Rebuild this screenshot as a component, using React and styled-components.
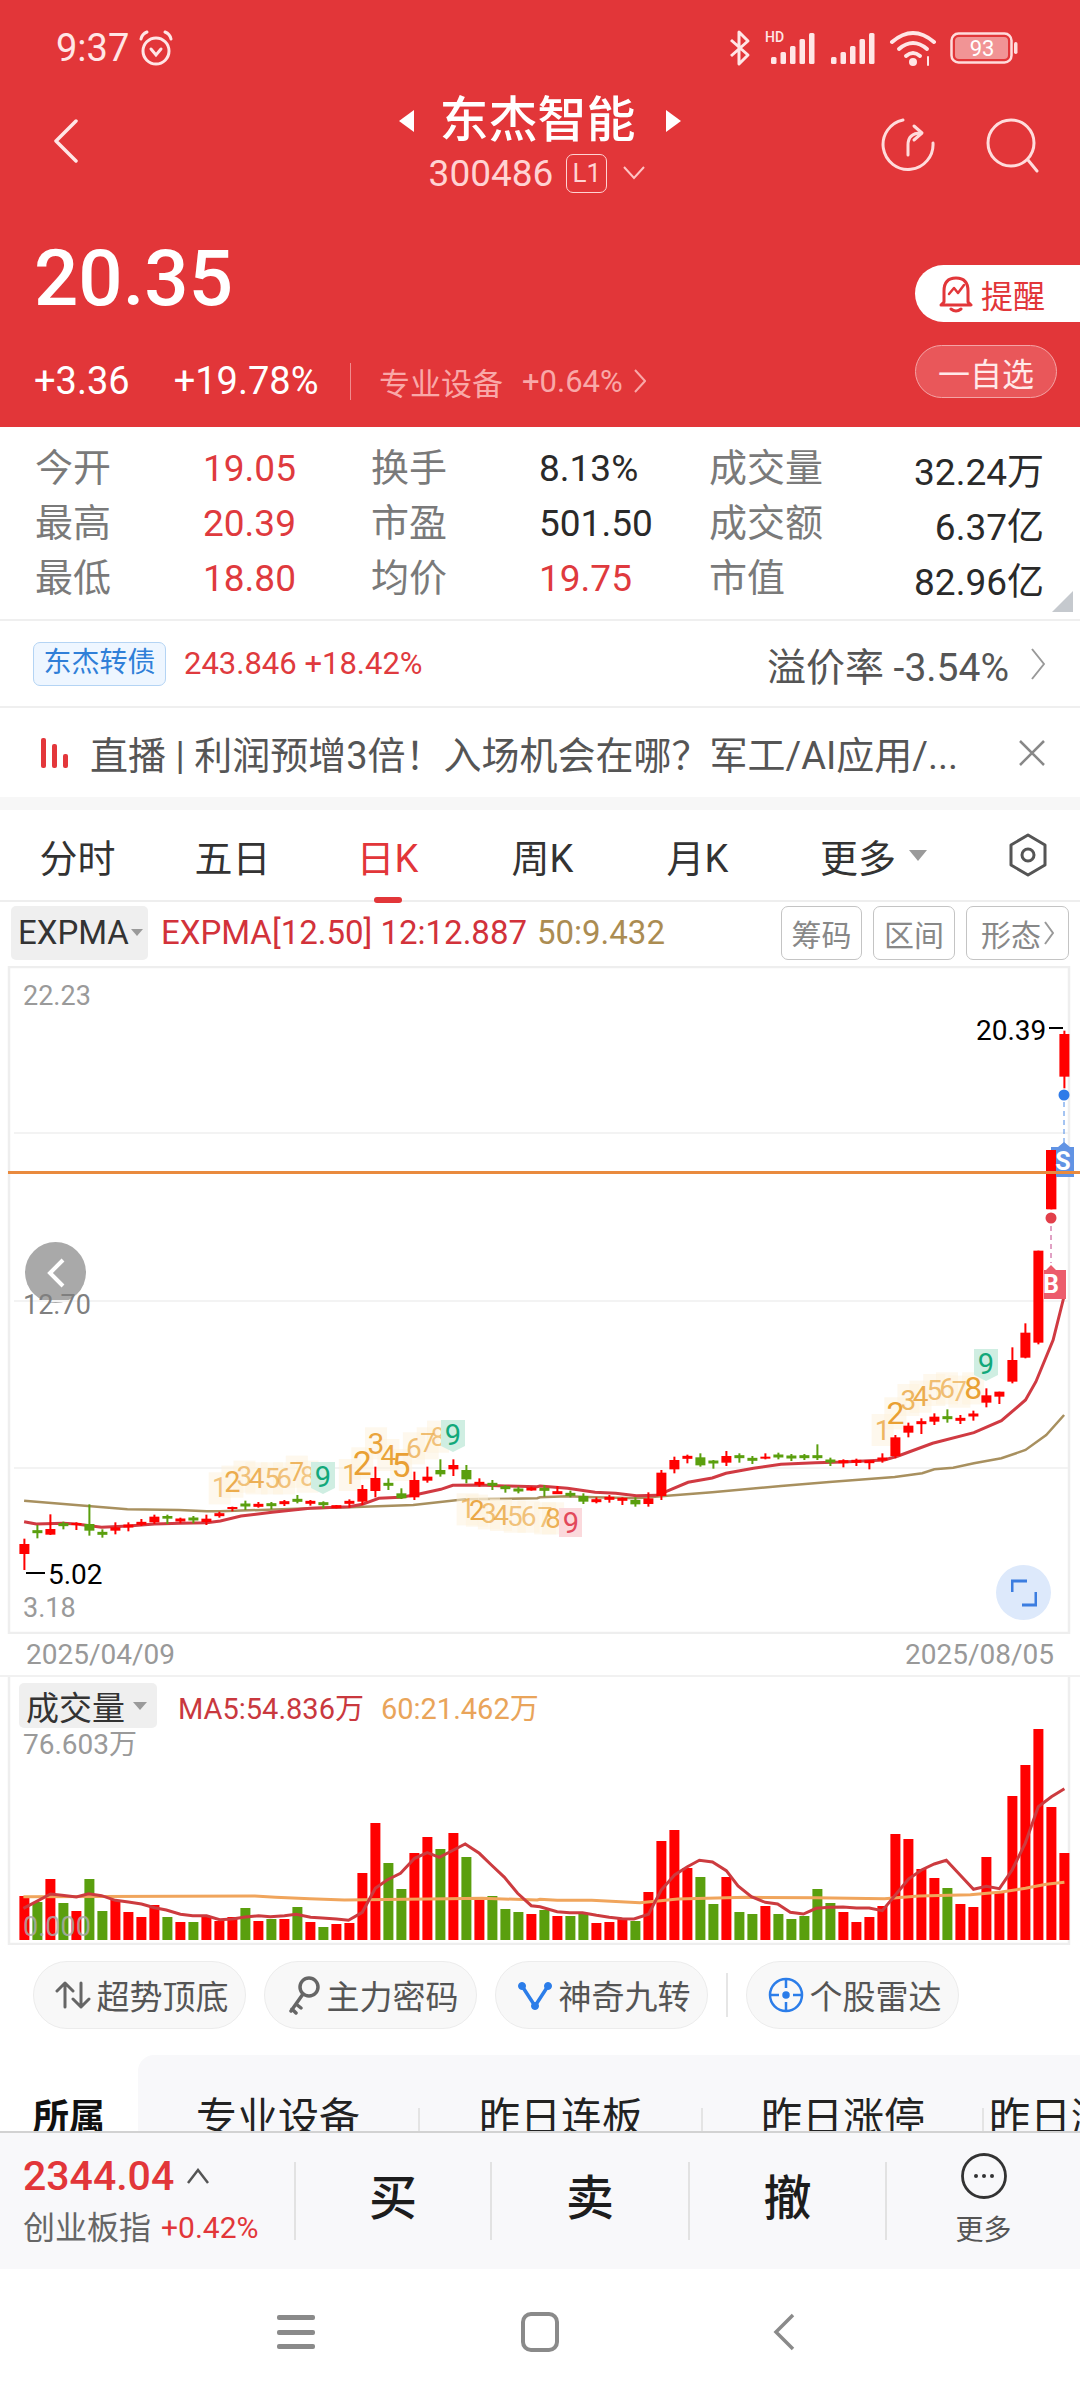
import React from 'react';
import styled, { createGlobalStyle } from 'styled-components';

const GlobalStyle = createGlobalStyle`
  html, body { margin: 0; padding: 0; background: #fff; }
  body { font-family: Roboto, "Noto Sans CJK SC", sans-serif; }
  * { box-sizing: border-box; }
`;

const RED = '#e23639';
const BAR_RED = '#ff0000';
const BAR_GREEN = '#5a9f0e';

const Page = styled.div`
  width: 1080px;
  height: 2400px;
  display: flex;
  flex-direction: column;
  overflow: hidden;
  background: #fff;
`;

/* ---------- red quote header ---------- */
const Header = styled.header`
  height: 427px;
  flex: none;
  background: ${RED};
  color: #fff;
  display: flex;
  flex-direction: column;
`;

const StatusBar = styled.div`
  height: 96px;
  display: flex;
  align-items: center;
  padding: 0 62px 0 56px;
`;

const Clock = styled.span`
  font-size: 38px;
  color: #ffe6e6;
  margin-right: 8px;
`;

const StatusIcons = styled.div`
  margin-left: auto;
  display: flex;
  align-items: center;
  gap: 13px;
`;

const NavRow = styled.div`
  height: 104px;
  display: grid;
  grid-template-columns: 1fr auto 1fr;
  align-items: center;
  padding: 0 40px 6px 40px;
`;

const BackSlot = styled.div`
  display: flex;
  padding: 0 0 8px 13px;
`;

const TitleBlock = styled.div`
  display: flex;
  flex-direction: column;
  align-items: center;
`;

const TitleLine = styled.div`
  display: flex;
  align-items: center;
  height: 50px;
`;

const Title = styled.h1`
  margin: 0 30px 0 25px;
  font-size: 49px;
  font-weight: 500;
  line-height: 50px;
  color: #fff;
`;

const Arrow = styled.span`
  width: 0;
  height: 0;
  border-top: 11px solid transparent;
  border-bottom: 11px solid transparent;
  ${(p) => (p.$left ? 'border-right: 15px solid #fff;' : 'border-left: 15px solid #fff;')}
`;

const CodeLine = styled.div`
  display: flex;
  align-items: center;
  height: 42px;
  margin: 6px 6px 0 0;
  color: #ffd3d3;
`;

const Code = styled.span`
  font-size: 37px;
`;

const LevelTag = styled.span`
  width: 41px;
  height: 39px;
  margin: 0 16px 0 13px;
  border: 1.5px solid #ffd3d3;
  border-radius: 7px;
  font-size: 26px;
  line-height: 36px;
  text-align: center;
`;

const NavActions = styled.div`
  display: flex;
  justify-content: flex-end;
  gap: 51px;
`;

const QuoteBlock = styled.div`
  flex: 1;
  display: flex;
  justify-content: space-between;
  padding-left: 34px;
`;

const QuoteLeft = styled.div`
  display: flex;
  flex-direction: column;
`;

const Price = styled.div`
  font-size: 78px;
  font-weight: 500;
  line-height: 80px;
  margin: 39px 0 0 0;
`;

const ChangeLine = styled.div`
  display: flex;
  align-items: center;
  height: 38px;
  margin-top: 43px;
  font-size: 38px;
`;

const ChangeValue = styled.span`
  margin-right: ${(p) => p.$gap}px;
`;

const Divider = styled.span`
  width: 1.5px;
  height: 37px;
  background: #f08c8e;
  margin-right: 28px;
`;

const SectorName = styled.span`
  font-size: 31px;
  color: #f9a8a8;
  margin-right: 19px;
`;

const SectorChange = styled.span`
  font-size: 31px;
  color: #f9a8a8;
  margin-right: 11px;
`;

const QuoteRight = styled.div`
  display: flex;
  flex-direction: column;
  align-items: flex-end;
  padding-top: 65px;
`;

const RemindButton = styled.div`
  width: 165px;
  height: 57px;
  background: #fff;
  border-radius: 29px 0 0 29px;
  display: flex;
  align-items: center;
  gap: 8px;
  padding-left: 24px;
  color: ${RED};
  font-size: 32px;
`;

const WatchButton = styled.div`
  width: 142px;
  height: 53px;
  margin: 23px 23px 0 0;
  background: #e9575a;
  border: 1.5px solid #f4a4a5;
  border-radius: 27px;
  display: flex;
  align-items: center;
  justify-content: center;
  color: #ffe9e9;
  font-size: 32px;
`;

/* ---------- stats table ---------- */
const Stats = styled.section`
  position: relative;
  height: 194px;
  flex: none;
  padding: 14px 36px 0 35px;
  display: grid;
  grid-template-columns: 168px 168px 168px 170px 130px 1fr;
  grid-auto-rows: 55px;
  align-items: center;
  border-bottom: 2px solid #efefef;
`;

const StatLabel = styled.span`
  font-size: 38px;
  line-height: 46px;
  padding-bottom: 2px;
  color: #7a7a7a;
`;

const StatValue = styled.span`
  font-size: 37px;
  color: ${(p) => (p.$up ? '#df3a3e' : '#2a2a2a')};
  white-space: nowrap;
  ${(p) => p.$end && 'text-align: right;'}
`;

const FoldCorner = styled.span`
  position: absolute;
  right: 7px;
  bottom: 7px;
  border-left: 21px solid transparent;
  border-bottom: 21px solid #c5c9ce;
`;

const BondRow = styled.section`
  height: 87px;
  flex: none;
  display: flex;
  align-items: center;
  padding: 0 35px 0 33px;
  border-bottom: 2px solid #efefef;
`;

const BondTag = styled.span`
  width: 133px;
  height: 44px;
  background: #eef6ff;
  border: 1.5px solid #b4d4f4;
  border-radius: 7px;
  color: #2f7fd8;
  font-size: 28px;
  line-height: 40px;
  text-align: center;
`;

const BondQuote = styled.span`
  margin-left: 18px;
  font-size: 31px;
  color: #df3a3e;
`;

const Premium = styled.span`
  margin-left: auto;
  font-size: 39px;
  color: #555;
  margin-right: 22px;
  white-space: nowrap;
`;

const NewsRow = styled.section`
  height: 89px;
  flex: none;
  display: flex;
  align-items: center;
  padding: 0 35px 0 41px;
`;

const NewsBars = styled.span`
  display: flex;
  align-items: flex-end;
  gap: 6px;
  height: 30px;
  margin-right: 22px;
`;

const NewsBar = styled.i`
  width: 5px;
  height: ${(p) => p.$h}px;
  background: #e3373b;
  border-radius: 2px;
`;

const NewsText = styled.span`
  flex: 1;
  font-size: 38px;
  color: #555;
  white-space: nowrap;
`;

const Band = styled.div`
  height: 13px;
  flex: none;
  background: #f7f7f7;
`;

/* ---------- period tabs ---------- */
const Tabs = styled.nav`
  height: 92px;
  flex: none;
  display: flex;
  align-items: center;
  padding-right: 32px;
  border-bottom: 2px solid #eee;
`;

const Tab = styled.div`
  position: relative;
  width: ${(p) => p.$w || 155}px;
  height: 100%;
  display: flex;
  align-items: center;
  justify-content: center;
  font-size: 38px;
  color: ${(p) => (p.$active ? RED : '#333')};
  ${(p) =>
    p.$active &&
    `&::after {
      content: '';
      position: absolute;
      left: 64px;
      bottom: -3px;
      width: 28px;
      height: 6px;
      border-radius: 3px;
      background: ${RED};
    }`}
`;

const Caret = styled.span`
  margin-left: ${(p) => p.$gap || 10}px;
  border-left: ${(p) => p.$w || 9}px solid transparent;
  border-right: ${(p) => p.$w || 9}px solid transparent;
  border-top: ${(p) => p.$h || 11}px solid #9a9a9a;
`;

const TabGear = styled.span`
  margin-left: auto;
  display: flex;
`;

const IndicatorRow = styled.div`
  height: 64px;
  flex: none;
  display: flex;
  align-items: center;
  padding: 3px 11px 6px 11px;
`;

const SelectBox = styled.div`
  height: ${(p) => p.$h}px;
  width: ${(p) => p.$w}px;
  padding-left: 7px;
  background: #efefef;
  border-radius: 5px;
  display: flex;
  align-items: center;
  font-size: 33px;
  color: #333;
`;

const Legend = styled.span`
  font-size: ${(p) => p.$size || 33}px;
  color: ${(p) => p.$color};
  margin-left: ${(p) => p.$gap}px;
  white-space: nowrap;
`;

const ToolGroup = styled.div`
  margin-left: auto;
  display: flex;
  gap: 11px;
`;

const ToolButton = styled.div`
  width: ${(p) => p.$w}px;
  height: 54px;
  border: 1.5px solid #c4c4c4;
  border-radius: 7px;
  display: flex;
  align-items: center;
  justify-content: center;
  gap: 3px;
  font-size: 30px;
  color: #888;
`;

/* ---------- charts ---------- */
const ChartArea = styled.div`
  position: relative;
  height: ${(p) => p.$h}px;
  flex: none;
`;

const ChartSvg = styled.svg`
  position: relative;
  z-index: 1;
  display: block;
`;

const AxisText = styled.text`
  font-size: ${(p) => p.$size || 27}px;
  fill: ${(p) => p.$fill || '#9a9a9a'};
`;

const SeqDigit = styled.text`
  font-size: ${(p) => p.$size}px;
  fill: ${(p) => p.$fill};
  text-anchor: middle;
  dominant-baseline: central;
`;

// sits under the chart layer so the axis label stays readable on top of it
const PrevButton = styled.div`
  position: absolute;
  z-index: 0;
  left: 25px;
  top: 276px;
  width: 61px;
  height: 61px;
  border-radius: 50%;
  background: #a9a9a9;
  display: flex;
  align-items: center;
  justify-content: center;
`;

const ExpandButton = styled.div`
  position: absolute;
  z-index: 2;
  left: 996px;
  top: 599px;
  width: 55px;
  height: 55px;
  border-radius: 50%;
  background: #dde9fb;
  display: flex;
  align-items: center;
  justify-content: center;
`;

const DateRow = styled.div`
  height: 43px;
  flex: none;
  display: flex;
  justify-content: space-between;
  align-items: center;
  padding: 0 26px;
  font-size: 28px;
  color: #999;
  border-bottom: 2px solid #f1f1f1;
`;

const VolumeLegend = styled.div`
  position: absolute;
  z-index: 2;
  left: 19px;
  top: 6px;
  display: flex;
  align-items: center;
`;

/* ---------- shortcut chips ---------- */
const ChipRow = styled.div`
  height: 110px;
  flex: none;
  display: flex;
  align-items: flex-start;
  gap: 18px;
  padding: 16px 0 0 33px;
`;

const Chip = styled.div`
  width: 213px;
  height: 68px;
  padding-left: 4px;
  background: #f8f8f8;
  border: 1.5px solid #ececec;
  border-radius: 34px;
  display: flex;
  align-items: center;
  justify-content: center;
  gap: 6px;
  font-size: 33px;
  color: #555;
`;

const ChipDivider = styled.span`
  width: 2px;
  height: 44px;
  margin-top: 12px;
  background: #e6e6e6;
`;

/* ---------- sector strip, half hidden by the trade bar ---------- */
const SectorStrip = styled.div`
  height: 76px;
  flex: none;
  display: flex;
  overflow: hidden;
`;

const StripLabel = styled.div`
  width: 138px;
  padding: 38px 0 0 33px;
  font-size: 36px;
  line-height: 50px;
  font-weight: 700;
  color: #111;
`;

const StripPanel = styled.div`
  flex: 1;
  display: flex;
  background: #f8f8fa;
  border-radius: 16px 0 0 0;
`;

const StripItem = styled.div`
  position: relative;
  flex: none;
  width: ${(p) => p.$w}px;
  padding: 35px 0 0 ${(p) => p.$pad}px;
  font-size: 41px;
  line-height: 56px;
  color: #222;
  white-space: nowrap;
  overflow: hidden;
  &::after {
    content: '';
    position: absolute;
    right: 0;
    top: 53px;
    width: 2px;
    height: 30px;
    background: #e4e4e4;
    display: ${(p) => (p.$last ? 'none' : 'block')};
  }
`;

/* ---------- trade bar ---------- */
const TradeBar = styled.div`
  height: 138px;
  flex: none;
  display: flex;
  align-items: center;
  background: #f8f8fa;
  border-top: 2px solid #d2d2d2;
`;

const IndexCell = styled.div`
  width: 294px;
  padding-left: 23px;
`;

const IndexValue = styled.div`
  display: flex;
  align-items: center;
  gap: 12px;
  font-size: 41px;
  font-weight: 500;
  line-height: 48px;
  color: ${RED};
`;

const IndexName = styled.div`
  display: flex;
  align-items: center;
  gap: 10px;
  margin-top: 6px;
  font-size: 32px;
  line-height: 44px;
  color: #666;
`;

const IndexChange = styled.span`
  font-size: 30px;
  color: ${RED};
`;

const TradeCell = styled.div`
  width: ${(p) => p.$w}px;
  height: 78px;
  border-left: 2px solid #e2e2e2;
  display: flex;
  flex-direction: column;
  align-items: center;
  justify-content: center;
  & > * {
    flex: none;
  }
`;

const TradeAction = styled.span`
  font-size: 48px;
  font-weight: 500;
  line-height: 60px;
  margin-bottom: 4px;
  color: #1d1d1d;
`;

const MoreLabel = styled.span`
  font-size: 28px;
  line-height: 36px;
  color: #555;
  margin-top: 14px;
`;

const SystemNav = styled.div`
  flex: 1;
  display: flex;
  justify-content: center;
  align-items: center;
  padding-bottom: 5px;
  background: #fff;
`;

const NavSlot = styled.div`
  width: 244px;
  display: flex;
  justify-content: center;
`;

/* ---------- chart data ---------- */
const STATS = [
  ['今开', '19.05', true, '换手', '8.13%', false, '成交量', '32.24万'],
  ['最高', '20.39', true, '市盈', '501.50', false, '成交额', '6.37亿'],
  ['最低', '18.80', true, '均价', '19.75', true, '市值', '82.96亿'],
];

// candle column x on the shared 13px pitch
const slotX = (i) => 24.4 + 13 * i;
const VOL_BASE = 1940;

// [up?, height] per session
const VOLUME = [
  [1, 44], [0, 38], [1, 61], [0, 37], [1, 29], [0, 61], [0, 29], [1, 40], [1, 28], [1, 23],
  [1, 35], [0, 23], [1, 18], [0, 18], [1, 23], [1, 19], [1, 23], [0, 32], [1, 19], [0, 21],
  [1, 21], [0, 33], [1, 18], [0, 13], [1, 16], [1, 17], [1, 67], [1, 117], [0, 77], [0, 51],
  [1, 87], [1, 103], [0, 91], [1, 107], [0, 83], [1, 43], [0, 44], [0, 31], [0, 28], [1, 26],
  [0, 30], [1, 24], [0, 24], [0, 26], [1, 17], [1, 18], [1, 21], [0, 19], [1, 48], [1, 99],
  [1, 110], [1, 72], [0, 63], [0, 36], [1, 63], [0, 28], [0, 26], [1, 34], [0, 26], [0, 21],
  [0, 24], [0, 51], [0, 37], [1, 28], [1, 18], [1, 23], [1, 34], [1, 106], [1, 101], [1, 71],
  [1, 62], [0, 52], [1, 36], [1, 33], [1, 83], [1, 47], [1, 144], [1, 175], [1, 211], [1, 133],
  [1, 87],
];

// Line samples are stored at 3x vertically and 2.904x horizontally with an origin per batch,
// which keeps them whole numbers.
const toPoints = (pts, ox, oy) => pts.map(([x, y]) => `${(ox + x / 2.904).toFixed(1)},${(oy + y / 3).toFixed(1)}`).join(' ');

const MA5 =
  toPoints(
    [[68,685],[105,665],[147,642],[180,646],[222,651],[257,641],[295,647],[335,661],[373,666],[411,672],[449,683],[483,690],[524,703],[560,707],[600,707],[638,719],[675,717],[712,711],[751,707],[785,710],[826,707],[860,703],[902,712],[936,714],[977,717],[1012,721],[1052,697],[1090,625],[1124,600],[1163,580],[1204,535],[1241,518],[1276,532],[1317,510],[1351,492],[1392,520],[1427,555],[1465,592],[1503,640],[1543,677]],
    0, 1680
  ) +
  ' ' +
  toPoints(
    [[0,680],[50,695],[86,698],[123,698],[164,706],[201,712],[239,716],[273,717],[315,703],[352,630],[391,585],[428,560],[463,541],[501,546],[541,572],[575,618],[614,650],[654,667],[690,672],[727,697],[765,702],[802,685],[841,682],[880,681],[919,684],[956,684],[994,692],[1032,645],[1070,597],[1108,570],[1145,552],[1180,541],[1220,585],[1259,628],[1296,619],[1334,626],[1371,570],[1409,490],[1447,380],[1485,350],[1523,326]],
    540, 1680
  );

const MA60 =
  toPoints([[68,650],[740,648],[800,652],[900,656],[1000,660],[1300,656],[1400,655],[1560,660]], 0, 1680) +
  ' ' +
  toPoints([[0,658],[50,661],[150,661],[290,668],[350,662],[400,657],[600,652],[800,653],[1000,656],[1100,648],[1250,644],[1340,636],[1410,625],[1470,613],[1523,607]], 540, 1680);

const EMA12 =
  toPoints([[70,245],[105,252],[183,250],[222,252],[295,262],[373,258],[449,252],[524,250],[600,248],[640,243],[700,228],[790,217],[900,205],[1014,200],[1052,193],[1100,175],[1163,172],[1204,165],[1280,148],[1315,136],[1392,135],[1465,138],[1560,140]], 0, 1440) +
  ' ' +
  toPoints([[0,318],[80,325],[160,337],[220,340],[280,347],[340,346],[430,307],[500,294],[540,280],[620,265],[700,253],[800,248],[880,246],[1000,240],[1040,228],[1140,190],[1260,158],[1340,122],[1410,60],[1440,5]], 540, 1380) +
  ' ' +
  toPoints([[1490,420],[1523,285]], 540, 1200);

const EMA50 =
  toPoints([[70,182],[370,208],[520,210],[600,214],[640,214],[900,205],[1014,202],[1200,195],[1350,178],[1560,175]], 0, 1440) +
  ' ' +
  toPoints([[0,352],[80,349],[160,352],[280,355],[370,347],[500,337],[700,318],[840,306],[1030,291],[1110,280],[1145,268],[1200,263],[1260,250],[1340,235],[1410,210],[1470,165],[1522,105]], 540, 1380);

// [up?, wickTop, bodyTop, bodyBottom, wickBottom]; equal body ends make a doji
const rows = (list, origin) =>
  list.map(([u, a, b, c, d]) => [u, origin + a / 3, origin + b / 3, origin + c / 3, origin + d / 3]);

const CANDLES = [
  ...rows(
    [
      [1,296,312,342,390],[0,255,275,275,295],[1,223,267,284,285],[0,245,254,254,268],[1,247,249,255,270],
      [0,193,252,272,287],[0,268,280,280,293],[1,247,262,272,283],[1,247,258,258,274],[1,237,250,250,258],
      [1,224,230,247,252],[0,224,228,236,252],[1,233,240,240,250],[0,228,237,237,250],[1,224,236,246,255],
      [1,215,224,224,233],[1,200,201,207,214],[0,182,195,195,210],[1,186,196,196,203],[0,186,194,194,208],
      [1,180,188,188,198],[0,165,181,181,190],[1,180,187,187,197],[0,184,191,191,205],[1,195,200,200,205],
      [1,178,187,187,203],[1,135,147,185,195],[1,80,114,153,172],[0,115,133,133,150],[0,145,160,175,177],
      [1,95,120,172,180],[1,80,110,122,128],[0,58,90,103,110],[1,58,75,88,108],[0,75,90,118,130],
      [1,115,130,130,140],[0,120,133,133,150],[0,135,143,143,158],[0,140,150,150,160],[1,140,147,147,152],
    ],
    1440
  ),
  ...rows(
    [
      [0,315,328,328,350],[1,318,338,338,342],[0,332,343,343,352],[0,340,348,365,372],[1,352,362,362,370],
      [1,345,355,355,368],[1,352,358,358,375],[0,352,360,373,380],[1,337,355,372,380],[1,270,278,348,360],
      [1,230,240,268,280],[1,224,232,232,250],[0,220,232,256,260],[0,240,246,246,266],[1,213,228,248,258],
      [0,220,230,230,248],[0,228,238,238,252],[1,220,230,236,238],[0,218,228,228,238],[0,222,231,231,243],
      [0,222,230,230,240],[0,193,230,230,240],[0,233,243,243,258],[1,238,245,245,262],[1,236,244,244,258],
      [1,240,245,245,268],[1,220,237,237,248],[1,165,172,228,235],[1,128,137,158,172],[1,115,128,128,162],
      [1,100,110,125,135],[0,88,113,113,128],[1,105,118,118,132],[1,92,105,105,122],[1,25,46,68,82],[1,35,35,50,72],
    ],
    1380
  ),
  ...rows(
    [[1,442,480,545,550],[1,370,398,473,475],[1,152,152,428,433]],
    1200
  ),
  ...rows(
    [[1,572,572,748,748],[1,212,222,350,385]],
    960
  ),
];

// Nine-count runs: digit, x, y, size, opacity
const RUNS = [
  { ox: 0, oy: 1240, digits: [[1,638,745,27,0.6],[2,675,725,29,0.85],[3,710,710,28,0.6],[4,745,715,28,0.8],[5,790,715,28,0.65],[6,825,715,28,0.6],[7,862,695,26,0.75],[8,893,710,27,0.55]] },
  { ox: 0, oy: 1240, digits: [[1,1016,705,27,0.8],[2,1052,670,34,1],[3,1092,610,30,0.95],[4,1128,645,28,0.95],[5,1165,675,34,1],[6,1202,625,28,0.65],[7,1242,610,26,0.65],[8,1272,590,26,0.6]] },
  { ox: 0, oy: 1240, digits: [[1,1358,808,27,0.65],[2,1385,812,28,0.9],[3,1420,820,28,0.65],[4,1455,825,28,0.75],[5,1495,830,28,0.6],[6,1535,830,28,0.6]] },
  { ox: 540, oy: 1380, digits: [[7,15,415,27,0.6],[8,38,415,28,0.8]] },
  { ox: 540, oy: 1200, digits: [[1,995,690,28,0.75],[2,1032,640,32,1],[3,1070,600,28,0.75],[4,1105,590,28,0.85],[5,1145,570,28,0.65],[6,1182,565,28,0.65],[7,1218,575,27,0.6],[8,1258,565,32,1]] },
];

const BADGES = [
  { x: 311, y: 1462, fill: '#cfeee2', color: '#12a87a', drop: true },
  { x: 441, y: 1420, fill: '#cfeee2', color: '#12a87a', drop: true },
  { x: 559, y: 1508, fill: '#fbd9dc', color: '#e2485a' },
  { x: 974, y: 1349, fill: '#cfeee2', color: '#12a87a', drop: true },
];

/* ---------- drawings ---------- */
const AlarmIcon = () => (
  <svg width="38" height="38" viewBox="0 0 38 38" fill="none" stroke="#ffe6e6" strokeWidth="3" strokeLinecap="round">
    <circle cx="19" cy="22" r="13" />
    <path d="M4 10 Q5 5 10 3 M34 10 Q33 5 28 3" />
    <path d="M14 20 L19 26 L24 20" />
  </svg>
);

const BluetoothIcon = () => (
  <svg width="22" height="38" viewBox="0 0 22 38" fill="none" stroke="#ffe6e6" strokeWidth="3" strokeLinejoin="round">
    <path d="M2 11 L19 26 L10 35 V3 L19 12 L2 27" />
  </svg>
);

const SignalIcon = ({ hd }) => (
  <svg width={hd ? 52 : 47} height="38" viewBox={`${hd ? -5 : 0} 0 ${hd ? 52 : 47} 38`} fill="#ffe6e6">
    {hd && (
      <text x="-4" y="13" fontSize="14" fontWeight="500" fill="#ffe6e6">
        HD
      </text>
    )}
    {[7, 12, 18, 25, 31].map((h, i) => (
      <rect key={i} x={2 + i * 9.5} y={35 - h} width="5.5" height={h} rx="1.5" />
    ))}
  </svg>
);

const WifiIcon = () => (
  <svg width="48" height="38" viewBox="0 0 48 38" fill="none" stroke="#ffe6e6" strokeWidth="4" strokeLinecap="round">
    <path d="M3 13 Q24 -5 45 13" />
    <path d="M10 20 Q24 8 38 20" />
    <path d="M17 27 Q24 21 31 27" />
    <circle cx="24" cy="33" r="2" fill="#ffe6e6" />
    <path d="M39 28 V36" strokeWidth="2" />
  </svg>
);

const BatteryIcon = () => (
  <svg width="68" height="32" viewBox="0 0 68 32">
    <rect x="1.5" y="1.5" width="60" height="29" rx="7" fill="none" stroke="#ffdcdc" strokeWidth="2.5" />
    <rect x="5" y="5" width="53" height="22" rx="4" fill="#f19495" />
    <rect x="64" y="10" width="3.5" height="12" rx="1.7" fill="#ffdcdc" />
    <text x="32" y="24" fontSize="22" textAnchor="middle" fill="#fff">
      93
    </text>
  </svg>
);

const BackIcon = () => (
  <svg width="26" height="44" viewBox="0 0 26 44" fill="none" stroke="#ffe6e6" strokeWidth="3.5" strokeLinecap="round" strokeLinejoin="round">
    <path d="M23 2 L3 22 L23 42" />
  </svg>
);

const ChevronDown = () => (
  <svg width="22" height="14" viewBox="0 0 22 14" fill="none" stroke="#ffc4c4" strokeWidth="2">
    <path d="M1 1 L11 12 L21 1" />
  </svg>
);

const RefreshIcon = () => (
  <svg width="54" height="56" viewBox="0 0 54 56" fill="none" stroke="#ffdcdc" strokeWidth="3" strokeLinecap="round" strokeLinejoin="round">
    <path d="M22 3 A25 25 0 1 0 52 26" />
    <path d="M27 38 V28 Q27 16 40 16" />
    <path d="M33 9 L41 16 L33 23" />
  </svg>
);

const SearchIcon = () => (
  <svg width="54" height="56" viewBox="0 0 54 56" fill="none" stroke="#ffdcdc" strokeWidth="3" strokeLinecap="round">
    <circle cx="25" cy="26" r="23" />
    <path d="M42 43 L51 54" />
  </svg>
);

const BellIcon = () => (
  <svg width="34" height="38" viewBox="0 0 34 38" fill="none" stroke={RED} strokeWidth="3" strokeLinejoin="round" strokeLinecap="round">
    <path d="M5 27 V16 Q5 3 17 3 Q29 3 29 16 V27 L32 30 H2 Z" />
    <path d="M12 34 Q17 38 22 34" />
    <path d="M10 19 L15 13 L19 18 L25 10" strokeWidth="2.5" />
  </svg>
);

const Chevron = ({ w = 12, h = 24, color = '#f9a8a8', sw = 2 }) => (
  <svg width={w} height={h} viewBox={`0 0 ${w} ${h}`} fill="none" stroke={color} strokeWidth={sw}>
    <path d={`M1 1 L${w - 1} ${h / 2} L1 ${h - 1}`} />
  </svg>
);

const CloseIcon = () => (
  <svg width="26" height="26" viewBox="0 0 26 26" stroke="#888" strokeWidth="2.5" fill="none">
    <path d="M1 1 L25 25 M25 1 L1 25" />
  </svg>
);

const GearIcon = () => (
  <svg width="40" height="44" viewBox="0 0 40 44" fill="none" stroke="#555" strokeWidth="3" strokeLinejoin="round">
    <path d="M20 2 L37 12 V32 L20 42 L3 32 V12 Z" />
    <circle cx="20" cy="22" r="6" />
  </svg>
);

const ArrowsIcon = () => (
  <svg width="36" height="30" viewBox="0 0 36 30" fill="none" stroke="#666" strokeWidth="3" strokeLinecap="round" strokeLinejoin="round">
    <path d="M10 27 V3 M2 11 L10 3 L18 11" />
    <path d="M26 3 V27 M18 19 L26 27 L34 19" />
  </svg>
);

const KeyIcon = () => (
  <svg width="34" height="40" viewBox="0 0 34 40" fill="none" stroke="#666" strokeWidth="3.5" strokeLinecap="round">
    <circle cx="22" cy="12" r="9" />
    <path d="M16 19 L4 36 M9 29 L14 33 M5 34 L9 38" />
  </svg>
);

const ForkIcon = () => (
  <svg width="36" height="34" viewBox="0 0 36 34" fill="#2b7de9" stroke="#2b7de9">
    <path d="M5 8 L18 28 L31 8" fill="none" strokeWidth="3.5" />
    <circle cx="5" cy="8" r="3.5" />
    <circle cx="31" cy="8" r="3.5" />
    <circle cx="18" cy="28" r="3.5" />
  </svg>
);

const RadarIcon = () => (
  <svg width="36" height="36" viewBox="0 0 36 36" fill="none" stroke="#2b7de9" strokeWidth="2.5">
    <circle cx="18" cy="18" r="16" />
    <path d="M18 1 V11 M18 25 V35 M1 18 H11 M25 18 H35" />
    <circle cx="18" cy="18" r="2.5" fill="#2b7de9" />
  </svg>
);

const MoreIcon = () => (
  <svg width="46" height="46" viewBox="0 0 46 46" fill="#333">
    <circle cx="23" cy="23" r="21.5" fill="none" stroke="#333" strokeWidth="2.8" />
    <circle cx="15" cy="23" r="2" />
    <circle cx="23" cy="23" r="2" />
    <circle cx="31" cy="23" r="2" />
  </svg>
);

const Candle = ({ index, data }) => {
  const [up, wickTop, bodyTop, bodyBottom, wickBottom] = data;
  const x = slotX(index);
  const color = up ? BAR_RED : BAR_GREEN;
  const doji = bodyBottom - bodyTop < 1;
  return (
    <g fill={color}>
      <rect x={x - 1} y={wickTop} width="2" height={wickBottom - wickTop} />
      {doji ? (
        <rect x={x - 5} y={bodyTop - 1.5} width="10" height="3" />
      ) : (
        <rect x={x - 5} y={bodyTop} width="10" height={bodyBottom - bodyTop} />
      )}
    </g>
  );
};

const MainChart = () => (
  <ChartSvg width="1080" height="668" viewBox="0 966 1080 668" fill="none">
    <rect x="9" y="967" width="1060" height="666" stroke="#eee" strokeWidth="2.5" />
    <path d="M14 1133 H1068 M14 1301 H1068 M14 1468 H1068" stroke="#f3f3f3" strokeWidth="2" />

    <AxisText x="23" y="1005">22.23</AxisText>
    <AxisText x="23" y="1314" $fill="#7f7f7f">12.70</AxisText>
    <AxisText x="23" y="1617">3.18</AxisText>

    <polyline points={EMA50} stroke="#a8905f" strokeWidth="2.5" />
    <polyline points={EMA12} stroke="#d03a42" strokeWidth="3" />

    {/* halos go down first so no digit gets covered by its neighbour's */}
    {RUNS.map((run, r) =>
      run.digits.map(([d, x, y]) => (
        <rect key={`${r}-${d}`} x={run.ox + x / 2.904 - 11} y={run.oy + y / 3 - 16} width="22" height="32" fill="#fdf1dc" opacity="0.5" />
      ))
    )}
    {RUNS.map((run, r) =>
      run.digits.map(([d, x, y, size, opacity]) => (
        <SeqDigit key={`${r}-${d}`} x={run.ox + x / 2.904} y={run.oy + y / 3} $size={size} $fill="#e9a033" opacity={opacity}>
          {d}
        </SeqDigit>
      ))
    )}

    {CANDLES.map((c, i) => (
      <Candle key={i} index={i} data={c} />
    ))}

    {BADGES.map((b) => (
      <g key={b.x}>
        <path
          d={
            b.drop
              ? `M${b.x} ${b.y} h24 v26 l-12 6 l-12 -6 Z`
              : `M${b.x} ${b.y} h23 v29 h-23 Z`
          }
          fill={b.fill}
        />
        <SeqDigit x={b.x + 12} y={b.y + 15} $size="29" $fill={b.color}>
          9
        </SeqDigit>
      </g>
    ))}

    <AxisText x="976" y="1040" $size="28" $fill="#000">20.39</AxisText>
    <path d="M1049 1028 H1063" stroke="#000" strokeWidth="2" />
    <AxisText x="48" y="1584" $size="28" $fill="#000">5.02</AxisText>
    <path d="M26 1573 H45" stroke="#000" strokeWidth="2" />

    {/* sell marker */}
    <circle cx="1064" cy="1095" r="5.5" fill="#2f7be8" />
    <path d="M1064 1102 V1143" stroke="#4a8ae6" strokeWidth="1" strokeDasharray="5 4" />
    <path d="M1051 1147 H1058 L1064 1142 L1070 1147 H1074 V1177 H1051 Z" fill="#6193e4" />
    <rect x="1046" y="1150" width="10" height="59" fill={BAR_RED} />
    <text x="1063" y="1170" fontSize="25" fontWeight="700" fill="#fff" textAnchor="middle">S</text>
    <rect x="8" y="1171" width="1072" height="3" fill="#e98a3e" />

    {/* buy marker */}
    <circle cx="1051" cy="1218" r="5.5" fill="#e23f4a" />
    <path d="M1051 1226 V1263" stroke="#c2448a" strokeWidth="1" strokeDasharray="5 4" />
    <path d="M1044 1270 H1046 L1051 1265 L1056 1270 H1066 V1299 H1044 Z" fill="#ec5c6c" />
    <text x="1051" y="1293" fontSize="25" fontWeight="700" fill="#fff" textAnchor="middle">B</text>
  </ChartSvg>
);

const VolumeChart = () => (
  <ChartSvg width="1080" height="268" viewBox="0 1677 1080 268" fill="none">
    <path d="M9 1677 V1944 H1069 V1677" stroke="#eee" strokeWidth="2.5" />
    {VOLUME.map(([up, h], i) => (
      <rect key={i} x={slotX(i) - 5} y={VOL_BASE - h} width="10" height={h} fill={up ? BAR_RED : BAR_GREEN} />
    ))}
    <AxisText x="23" y="1754" $size="28">76.603万</AxisText>
    <polyline points={MA60} stroke="#f0a55c" strokeWidth="3" />
    <polyline points={MA5} stroke="#cc3b3f" strokeWidth="3" />
    <AxisText x="23" y="1936" $size="27" $fill="#aaa" opacity="0.85">0.000</AxisText>
  </ChartSvg>
);

const App = () => (
  <Page>
    <GlobalStyle />
    <Header>
      <StatusBar>
        <Clock>9:37</Clock>
        <AlarmIcon />
        <StatusIcons>
          <BluetoothIcon />
          <SignalIcon hd />
          <SignalIcon />
          <WifiIcon />
          <BatteryIcon />
        </StatusIcons>
      </StatusBar>

      <NavRow>
        <BackSlot>
          <BackIcon />
        </BackSlot>
        <TitleBlock>
          <TitleLine>
            <Arrow $left />
            <Title>东杰智能</Title>
            <Arrow />
          </TitleLine>
          <CodeLine>
            <Code>300486</Code>
            <LevelTag>L1</LevelTag>
            <ChevronDown />
          </CodeLine>
        </TitleBlock>
        <NavActions>
          <RefreshIcon />
          <SearchIcon />
        </NavActions>
      </NavRow>

      <QuoteBlock>
        <QuoteLeft>
          <Price>20.35</Price>
          <ChangeLine>
            <ChangeValue $gap={44}>+3.36</ChangeValue>
            <ChangeValue $gap={31}>+19.78%</ChangeValue>
            <Divider />
            <SectorName>专业设备</SectorName>
            <SectorChange>+0.64%</SectorChange>
            <Chevron />
          </ChangeLine>
        </QuoteLeft>
        <QuoteRight>
          <RemindButton>
            <BellIcon />
            提醒
          </RemindButton>
          <WatchButton>一自选</WatchButton>
        </QuoteRight>
      </QuoteBlock>
    </Header>

    <Stats>
      {STATS.flatMap((r) => [
        <StatLabel key={r[0]}>{r[0]}</StatLabel>,
        <StatValue key={r[0] + 'v'} $up={r[2]}>{r[1]}</StatValue>,
        <StatLabel key={r[3]}>{r[3]}</StatLabel>,
        <StatValue key={r[3] + 'v'} $up={r[5]}>{r[4]}</StatValue>,
        <StatLabel key={r[6]}>{r[6]}</StatLabel>,
        <StatValue key={r[6] + 'v'} $end>{r[7]}</StatValue>,
      ])}
      <FoldCorner />
    </Stats>

    <BondRow>
      <BondTag>东杰转债</BondTag>
      <BondQuote>243.846 +18.42%</BondQuote>
      <Premium>溢价率 -3.54%</Premium>
      <Chevron w={14} h={32} color="#999" />
    </BondRow>

    <NewsRow>
      <NewsBars>
        <NewsBar $h={30} />
        <NewsBar $h={24} />
        <NewsBar $h={14} />
      </NewsBars>
      <NewsText>直播 | 利润预增3倍！入场机会在哪？军工/AI应用/...</NewsText>
      <CloseIcon />
    </NewsRow>

    <Band />

    <Tabs>
      <Tab>分时</Tab>
      <Tab>五日</Tab>
      <Tab $active>日K</Tab>
      <Tab>周K</Tab>
      <Tab>月K</Tab>
      <Tab $w={197}>
        更多
        <Caret $gap={13} />
      </Tab>
      <TabGear>
        <GearIcon />
      </TabGear>
    </Tabs>

    <IndicatorRow>
      <SelectBox $w={137} $h={54}>
        EXPMA
        <Caret $gap={2} $w={6} $h={7} />
      </SelectBox>
      <Legend $color="#d2323a" $gap={13}>EXPMA[12.50] 12:12.887</Legend>
      <Legend $color="#ab8c52" $gap={10}>50:9.432</Legend>
      <ToolGroup>
        <ToolButton $w={81}>筹码</ToolButton>
        <ToolButton $w={82}>区间</ToolButton>
        <ToolButton $w={103}>
          形态
          <Chevron w={10} h={24} color="#999" />
        </ToolButton>
      </ToolGroup>
    </IndicatorRow>

    <ChartArea $h={668}>
      <PrevButton>
        <svg width="20" height="32" viewBox="0 0 20 32" fill="none" stroke="#fff" strokeWidth="4">
          <path d="M17 3 L4 16 L17 29" />
        </svg>
      </PrevButton>
      <MainChart />
      <ExpandButton>
        <svg width="26" height="28" viewBox="0 0 26 28" fill="none" stroke="#3b7de0" strokeWidth="3">
          <path d="M1 13 V2 H16 M25 13 V26 H11" />
        </svg>
      </ExpandButton>
    </ChartArea>

    <DateRow>
      <span>2025/04/09</span>
      <span>2025/08/05</span>
    </DateRow>

    <ChartArea $h={268}>
      <VolumeChart />
      <VolumeLegend>
        <SelectBox $w={138} $h={45}>
          成交量
          <Caret $gap={8} $w={7} $h={8} />
        </SelectBox>
        <Legend $color="#c9383e" $gap={21} $size={29}>MA5:54.836万</Legend>
        <Legend $color="#e9a45a" $gap={17} $size={29}>60:21.462万</Legend>
      </VolumeLegend>
    </ChartArea>

    <ChipRow>
      <Chip>
        <ArrowsIcon />
        超势顶底
      </Chip>
      <Chip>
        <KeyIcon />
        主力密码
      </Chip>
      <Chip>
        <ForkIcon />
        神奇九转
      </Chip>
      <ChipDivider />
      <Chip>
        <RadarIcon />
        个股雷达
      </Chip>
    </ChipRow>

    <SectorStrip>
      <StripLabel>所属</StripLabel>
      <StripPanel>
        <StripItem $w={282} $pad={58}>专业设备</StripItem>
        <StripItem $w={283} $pad={59}>昨日连板</StripItem>
        <StripItem $w={281} $pad={58}>昨日涨停</StripItem>
        <StripItem $w={96} $pad={5} $last>昨日涨停</StripItem>
      </StripPanel>
    </SectorStrip>

    <TradeBar>
      <IndexCell>
        <IndexValue>
          2344.04
          <svg width="24" height="16" viewBox="0 0 24 16" fill="none" stroke="#555" strokeWidth="2.5">
            <path d="M2 15 L12 2 L22 15" />
          </svg>
        </IndexValue>
        <IndexName>
          创业板指
          <IndexChange>+0.42%</IndexChange>
        </IndexName>
      </IndexCell>
      <TradeCell $w={196}><TradeAction>买</TradeAction></TradeCell>
      <TradeCell $w={198}><TradeAction>卖</TradeAction></TradeCell>
      <TradeCell $w={197}><TradeAction>撤</TradeAction></TradeCell>
      <TradeCell $w={195}>
        <MoreIcon />
        <MoreLabel>更多</MoreLabel>
      </TradeCell>
    </TradeBar>

    <SystemNav>
      <NavSlot>
        <svg width="38" height="34" viewBox="0 0 38 34" fill="#8a8a8a">
          <rect y="0" width="38" height="5" rx="2" />
          <rect y="15" width="38" height="5" rx="2" />
          <rect y="29" width="38" height="5" rx="2" />
        </svg>
      </NavSlot>
      <NavSlot>
        <svg width="38" height="40" viewBox="0 0 38 40" fill="none" stroke="#8a8a8a" strokeWidth="4">
          <rect x="2" y="2" width="34" height="36" rx="8" />
        </svg>
      </NavSlot>
      <NavSlot>
        <svg width="22" height="38" viewBox="0 0 22 38" fill="none" stroke="#8a8a8a" strokeWidth="3.5">
          <path d="M20 2 L3 19 L20 36" />
        </svg>
      </NavSlot>
    </SystemNav>
  </Page>
);

export default App;
